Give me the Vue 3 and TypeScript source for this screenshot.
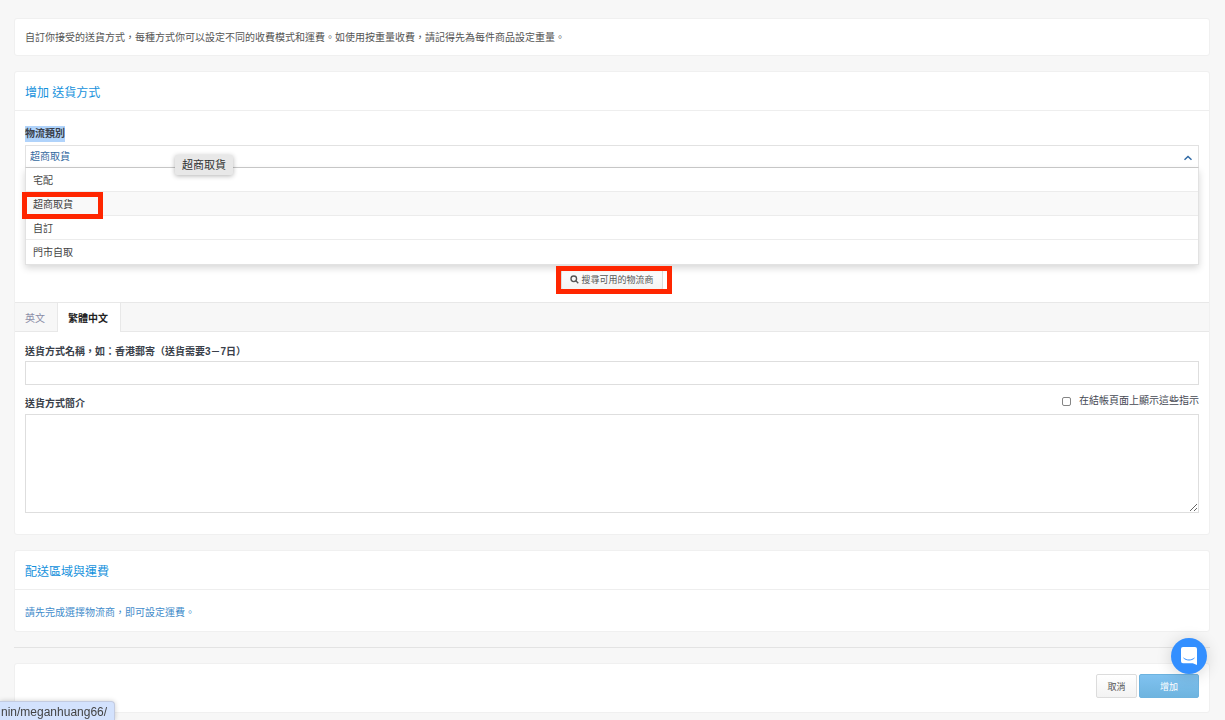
<script setup lang="ts">
import { ref } from 'vue'

const categories: string[] = ['宅配', '超商取貨', '自訂', '門市自取']
const selected = ref<string>('超商取貨')
const languages: string[] = ['英文', '繁體中文']
const language = ref<string>('繁體中文')
const methodName = ref<string>('')
const description = ref<string>('')
const showAtCheckout = ref<boolean>(false)
</script>

<template>
  <main class="page">
    <section class="card intro">
      <p>自訂你接受的送貨方式，每種方式你可以設定不同的收費模式和運費。如使用按重量收費，請記得先為每件商品設定重量。</p>
    </section>

    <section class="card">
      <h2 class="card-title">增加 送貨方式</h2>
      <div class="category">
        <label class="label" for="category"><span class="selection">物流類別</span></label>
        <div class="combo">
          <select id="category" v-model="selected" class="select">
            <option v-for="item in categories" :key="item" :value="item">{{ item }}</option>
          </select>
          <svg class="chevron" viewBox="0 0 10 6" aria-hidden="true">
            <path d="M1.5 4.8 5 1.5 8.5 4.8" />
          </svg>
          <ul class="menu" role="listbox" aria-label="物流類別">
            <li
              v-for="item in categories"
              :key="item"
              class="option"
              :class="{ active: item === selected }"
              role="option"
              :aria-selected="item === selected"
              @click="selected = item"
            >
              {{ item }}
              <span v-if="item === '超商取貨'" class="mark mark-option"></span>
            </li>
          </ul>
          <span class="tooltip" role="tooltip">{{ selected }}</span>
        </div>
        <div class="search-row">
          <div class="search-wrap">
            <button type="button" class="button search">
              <svg class="glass" viewBox="0 0 10 10" aria-hidden="true">
                <circle cx="4.2" cy="4.2" r="3.1" />
                <path d="M6.5 6.5 9.2 9.2" />
              </svg>
              搜尋可用的物流商
            </button>
            <span class="mark mark-search"></span>
          </div>
        </div>
      </div>

      <div class="tabs" role="tablist">
        <button
          v-for="item in languages"
          :key="item"
          type="button"
          role="tab"
          class="tab"
          :class="{ current: item === language }"
          :aria-selected="item === language"
          @click="language = item"
        >
          {{ item }}
        </button>
      </div>

      <div class="fields">
        <label class="label" for="name">送貨方式名稱，如：香港郵寄（送貨需要3－7日）</label>
        <input id="name" v-model="methodName" class="input" type="text" />
        <div class="label-row">
          <label class="label" for="description">送貨方式簡介</label>
          <label class="check">
            <input v-model="showAtCheckout" type="checkbox" />
            在結帳頁面上顯示這些指示
          </label>
        </div>
        <textarea id="description" v-model="description" class="textarea"></textarea>
      </div>
    </section>

    <section class="card">
      <h2 class="card-title">配送區域與運費</h2>
      <p class="notice">請先完成選擇物流商，即可設定運費。</p>
    </section>

    <hr class="rule" />

    <footer class="card actions">
      <button type="button" class="button cancel">取消</button>
      <button type="button" class="button primary">增加</button>
    </footer>

    <button type="button" class="chat" aria-label="Chat">
      <svg viewBox="0 0 16 18" aria-hidden="true">
        <path class="bubble" d="M2 0h12a2 2 0 0 1 2 2v16l-4.200-1.800H2a2 2 0 0 1-2-2V2a2 2 0 0 1 2-2z" />
        <path class="smile" d="M2.800 11.200c2.900 2.500 7.500 2.500 10.400 0" />
      </svg>
    </button>
    <div class="status">nin/meganhuang66/</div>
  </main>
</template>

<style>
body {
  margin: 0;
  background: #f7f7f7;
}
</style>

<style scoped>
.page,
.page * {
  box-sizing: border-box;
}
.page {
  min-height: 100vh;
  padding: 18px 15px 8px 14px;
  color: #555;
  font-family: "Liberation Sans", "Noto Sans CJK TC", sans-serif;
  font-size: 10px;
  line-height: 16px;
}
.page button,
.page select,
.page input,
.page textarea {
  font-family: inherit;
}
.page p,
.page h2,
.page ul {
  margin: 0;
}
.card {
  margin-bottom: 15px;
  border: 1px solid #f0f0f0;
  border-radius: 3px;
  background: #fff;
}
.page .intro {
  padding: 11px 10px 9px;
}
.card-title {
  padding: 13px 10px 9px;
  border-bottom: 1px solid #eee;
  color: #1591dc;
  font-size: 12px;
  font-weight: 400;
  line-height: 16px;
}
.category {
  padding: 15px 10px 12px;
}
.label {
  display: block;
  color: #3a3f4a;
  font-weight: 700;
}
.selection {
  display: inline-block;
  background: #b0d3fb;
}
.combo {
  position: relative;
  margin-top: 3px;
}
.select {
  display: block;
  width: 100%;
  height: 23px;
  padding: 0 4px;
  border: 1px solid #e2e2e2;
  border-bottom-color: #ccc;
  border-radius: 0;
  outline: none;
  appearance: none;
  background: #fff;
  color: #356a9f;
  font-size: 10px;
}
.chevron {
  position: absolute;
  top: 10px;
  right: 6px;
  width: 10px;
  height: 6px;
  fill: none;
  stroke: #2f69a5;
  stroke-width: 1.5;
}
.menu {
  position: absolute;
  z-index: 2;
  top: 23px;
  left: 0;
  right: 0;
  padding: 0;
  border: 1px solid #e2e2e2;
  border-top: 0;
  background: #fff;
  box-shadow: 0 3px 7px rgba(0, 0, 0, 0.16);
  list-style: none;
}
.option {
  position: relative;
  height: 24px;
  padding: 5px 7px 2px;
  border-bottom: 1px solid #ececec;
  color: #444;
  line-height: 16px;
}
.option:last-child {
  border-bottom: 0;
}
.option.active {
  background: #f9f9f9;
}
.mark {
  position: absolute;
  border: 5px solid #ff2600;
  pointer-events: none;
}
.mark-option {
  top: 0;
  left: -4px;
  width: 81px;
  height: 27px;
}
.mark-search {
  z-index: 3;
  top: -2px;
  left: -5px;
  right: -9px;
  bottom: -4px;
}
.tooltip {
  position: absolute;
  z-index: 4;
  top: 10px;
  left: 150px;
  padding: 2px 7px;
  border-radius: 2px;
  background: #e8e8e8;
  box-shadow: 0 1px 5px rgba(0, 0, 0, 0.3);
  color: #333;
  font-size: 11px;
}
.search-row {
  display: flex;
  justify-content: center;
  margin-top: 100px;
}
.search-wrap {
  position: relative;
}
.button {
  height: 24px;
  border: 1px solid #dcdcdc;
  border-radius: 2px;
  background: linear-gradient(#fff, #f3f3f3);
  color: #555;
  font-size: 9px;
}
.search {
  display: flex;
  align-items: center;
  gap: 2px;
  height: 22px;
  padding: 0 8px;
}
.glass {
  width: 9px;
  height: 9px;
  fill: none;
  stroke: #555;
  stroke-width: 1.5;
}
.tabs {
  display: flex;
  height: 30px;
  border-top: 1px solid #e8e8e8;
  border-bottom: 1px solid #e8e8e8;
  background: #f7f7f7;
}
.tab {
  height: 29px;
  padding: 0 12px 0 10px;
  border: 0;
  border-right: 1px solid #e8e8e8;
  background: transparent;
  color: #8a8ca6;
  font-size: 10px;
}
.tab.current {
  background: #fff;
  color: #222;
  font-weight: 700;
}
.fields {
  padding: 12px 10px 21px;
}
.input,
.textarea {
  display: block;
  width: 100%;
  border: 1px solid #dedede;
  outline: none;
  background: #fff;
  font-size: 10px;
}
.input {
  height: 24px;
  margin-top: 1px;
  padding: 0 5px;
}
.label-row {
  display: flex;
  justify-content: space-between;
  margin: 8px 0 2px;
}
.label-row > .label {
  padding-top: 3px;
}
.check {
  display: flex;
  align-items: center;
  gap: 8px;
  height: 16px;
  color: #444853;
}
.check input {
  width: 9px;
  height: 9px;
  margin: 0;
  border: 1px solid #858585;
  border-radius: 2px;
  appearance: none;
  background: #fff;
}
.check input:checked {
  background: #1591dc;
}
.textarea {
  height: 99px;
  padding: 5px;
  resize: vertical;
}
.page .notice {
  padding: 15px 10px 10px;
  color: #428bca;
}
.rule {
  margin: 0 0 15px;
  border: 0;
  border-top: 1px solid #e3e3e3;
}
.actions {
  display: flex;
  justify-content: flex-end;
  gap: 2px;
  margin-bottom: 0;
  padding: 10px 10px 14px;
}
.cancel {
  width: 41px;
  padding: 0;
}
.primary {
  width: 60px;
  padding: 0;
  border-color: #6db3df;
  background: linear-gradient(#80c2f0, #6eb4df);
  color: #fff;
}
.chat {
  position: fixed;
  z-index: 5;
  right: 18px;
  bottom: 46px;
  display: grid;
  width: 36px;
  height: 36px;
  padding: 0;
  place-items: center;
  border: 0;
  border-radius: 50%;
  background: #338fff;
  box-shadow: 0 2px 16px rgba(0, 0, 0, 0.16);
}
.chat svg {
  width: 16px;
  height: 18px;
}
.bubble {
  fill: #fff;
}
.smile {
  fill: none;
  stroke: #338fff;
  stroke-linecap: round;
}
.status {
  position: fixed;
  z-index: 5;
  bottom: 0;
  left: 0;
  height: 19px;
  padding: 2px 7px 0 1px;
  border: 1px solid #c3cbe0;
  border-bottom: 0;
  border-left: 0;
  border-top-right-radius: 4px;
  background: #d3e2fd;
  box-shadow: 0 0 5px rgba(0, 0, 0, 0.2);
  color: #444;
  font-size: 12px;
}
</style>
